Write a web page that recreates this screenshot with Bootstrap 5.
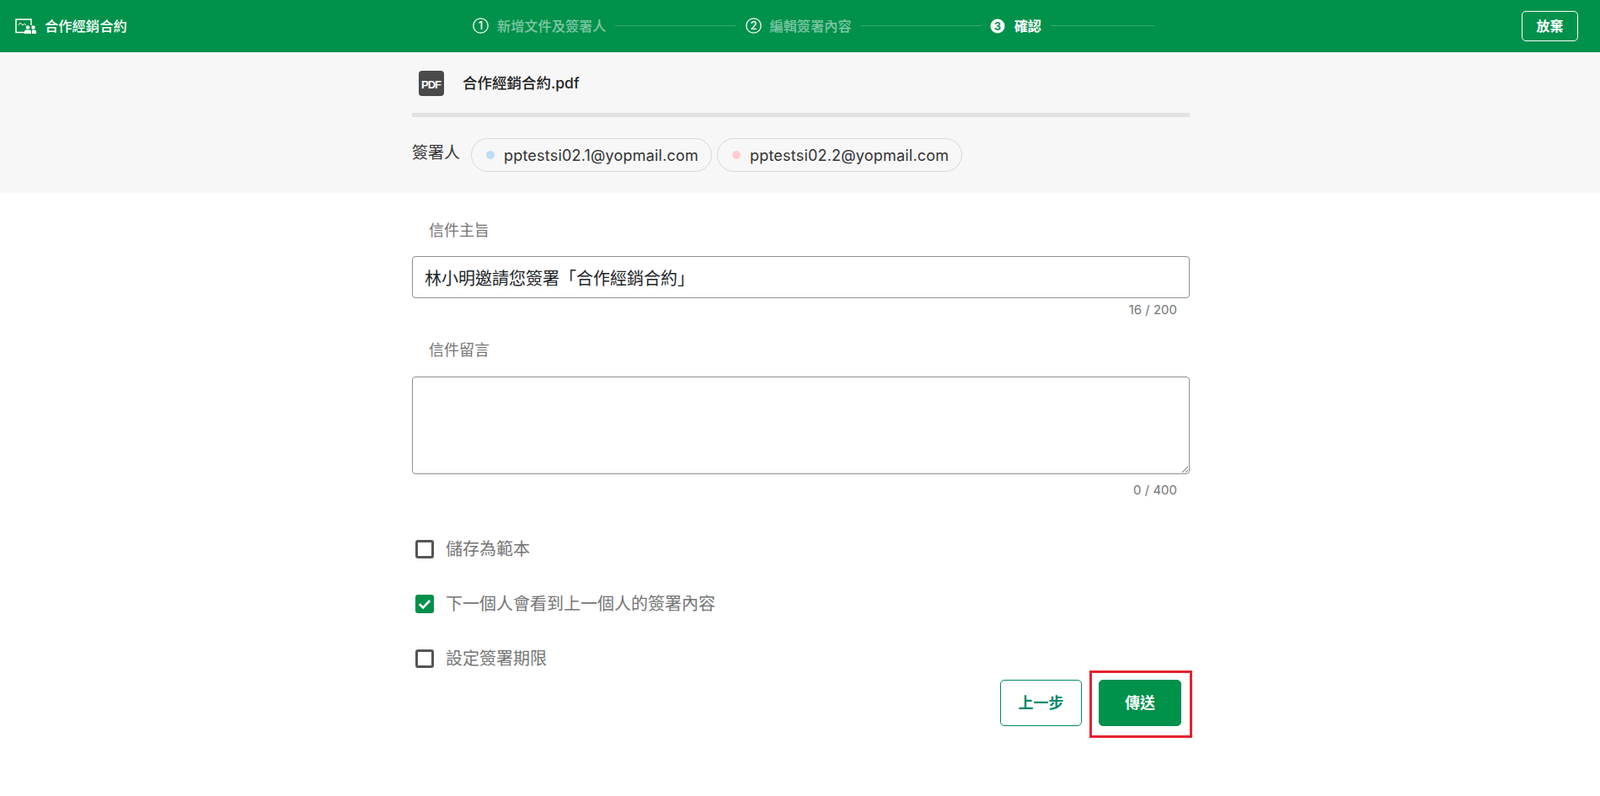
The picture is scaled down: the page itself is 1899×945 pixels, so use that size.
<!DOCTYPE html>
<html lang="zh-Hant">
<head>
<meta charset="utf-8">
<title>確認</title>
<link href="https://cdn.jsdelivr.net/npm/bootstrap@5.3.0/dist/css/bootstrap.min.css" rel="stylesheet">
<style>
:root{--g:#00914b;}
body{font-family:"Inter","Noto Sans CJK TC",sans-serif;color:#212529;background:#fff;}
.topbar{height:62px;background:var(--g);color:#fff;padding:0 26px 0 18px;}
.brandbox{width:543px;font-size:16.300px;font-weight:500;gap:10px;}
.stepitem{gap:10px;font-size:16.200px;font-weight:500;color:rgba(255,255,255,.5);}
.stepitem.nowstep{color:#fff;font-weight:700;gap:11px;}
.stepitem svg{flex:none;}
.stepline{height:1px;background:rgba(255,255,255,.2);}
.w144{width:144px;}.w123{width:123px;}
.step1{margin-right:11px;}.step2{margin-right:10px;}
.quitbtn{width:67px;height:36px;padding:0;font-size:16px;font-weight:700;color:#fff;border:1px solid #fff;border-radius:5px;}
.quitbtn:hover{color:#fff;}
.docband{background:#f7f7f7;height:167px;}
.inner{width:923px;margin-left:489px;}
.filerow{height:72px;padding:22px 0 0 8px;gap:23px;align-items:flex-start;}
.filename{font-size:17.500px;font-weight:500;line-height:30px;color:#212121;margin-left:-1px;}
.splitbar{height:5px;background:#e2e2e2;}
.signrow{margin-top:25px;gap:6px;}
.signlabel{font-size:19px;color:#333;margin-right:7px;line-height:40px;height:40px;position:relative;top:-2px;white-space:nowrap;}
.chipbox{height:40px;border:1px solid #d8d8d8;border-radius:20px;padding:0 15px 0 17px;font-size:18px;color:#333;gap:11px;letter-spacing:.2px;}
.dotmark{width:10px;height:10px;border-radius:50%;flex:none;}
.dotblue{background:#bcdcf8;}.dotpink{background:#ffccd2;}
.fieldtitle{font-size:18px;line-height:27px;color:#757575;margin:0 0 17px;padding-left:20px;}
.fieldbox{border:1px solid #8f8f8f;border-radius:4px;font-size:20px;color:#212529;padding:0 12px 0 14px;font-family:"Noto Sans CJK TC",sans-serif;}
input.fieldbox{height:50px;}
textarea.fieldbox{height:116px;resize:both;display:block;}
.countnote{font-size:15px;line-height:21px;color:#757575;text-align:right;padding-right:15px;}
.checkrow{height:30px;margin:0 0 35px;padding:0 0 0 4px;display:flex;align-items:center;gap:14px;}
.checkrow .form-check-input{width:22px;height:22px;margin:0;float:none;border:3px solid #555;border-radius:3px;flex:none;}
.checkrow .form-check-input:checked{border-color:var(--g);background-color:var(--g);background-origin:border-box;background-size:22px 22px;background-repeat:no-repeat;background-position:center;background-image:url("data:image/svg+xml,%3Csvg xmlns='http://www.w3.org/2000/svg' viewBox='0 0 22 22'%3E%3Cpath d='M4.800 11.200l4.300 4.300 8-8.500' fill='none' stroke='%23fff' stroke-width='2.600'/%3E%3C/svg%3E");}
.checkrow .form-check-label{font-size:20px;color:#757575;}
.actionrow{gap:20px;padding-right:10px;margin-top:-25px;padding-bottom:30px;}
.backbtn,.sendbtn{height:55px;font-size:18px;font-weight:700;padding:0;border-radius:5px;}
.backbtn{width:97px;color:#00896a;border:1px solid #00896a;background:#fff;}
.sendbtn{width:98px;color:#fff;background:var(--g);border:1px solid var(--g);}
.sendwrap{position:relative;height:55px;}
.redframe{position:absolute;left:-11px;top:-11px;width:122px;height:80px;border:3px solid #e6212e;pointer-events:none;}
.mt-subject{padding-top:31px;}
.mt-subject .countnote{margin-top:3px;}
.mt-message{padding-top:24px;}
.mt-message .fieldtitle{margin-bottom:18px;}
.note2{margin-top:7.500px;}
.checkgroup{padding-top:45px;}
</style>
</head>
<body>
<header class="topbar d-flex align-items-center">
  <div class="brandbox d-flex align-items-center">
    <svg width="25" height="18" viewBox="0 0 25 18" fill="none"><path d="M12 16.500H1V1h18v7" stroke="#fff" stroke-width="1.500"/><path d="M4 8l2-3 3 3 2-2 2 2" stroke="#fff" stroke-width="1"/><circle cx="15" cy="10.500" r="2.200" fill="#fff"/><circle cx="21.500" cy="10.500" r="2.200" fill="#fff"/><path d="M11 18v-2.500q0-2 2-2h4q2 0 2 2v2.500z M20 18v-4.500h3q2 0 2 2v2.500z" fill="#fff"/></svg>
    <span>合作經銷合約</span>
  </div>
  <nav class="d-flex align-items-center flex-grow-1">
    <div class="stepitem step1 d-flex align-items-center">
      <svg width="19" height="19" viewBox="0 0 19 19"><circle cx="9.500" cy="9.500" r="8.700" fill="none" stroke="#fff" stroke-width="1.300"/><text x="9.500" y="14" text-anchor="middle" font-size="13" fill="#fff" font-family="Inter">1</text></svg>
      <span>新增文件及簽署人</span><span class="stepline w144"></span>
    </div>
    <div class="stepitem step2 d-flex align-items-center">
      <svg width="19" height="19" viewBox="0 0 19 19"><circle cx="9.500" cy="9.500" r="8.700" fill="none" stroke="#fff" stroke-width="1.300"/><text x="9.500" y="14" text-anchor="middle" font-size="13" fill="#fff" font-family="Inter">2</text></svg>
      <span>編輯簽署內容</span><span class="stepline w144"></span>
    </div>
    <div class="stepitem nowstep d-flex align-items-center">
      <svg width="18" height="18" viewBox="0 0 18 18"><circle cx="9" cy="9" r="8.500" fill="#fff"/><text x="9" y="13.500" text-anchor="middle" font-size="12.500" font-weight="700" fill="#00914b" font-family="Inter">3</text></svg>
      <span>確認</span><span class="stepline w123"></span>
    </div>
  </nav>
  <button type="button" class="btn quitbtn ms-auto">放棄</button>
</header>

<section class="docband">
  <div class="inner">
    <div class="filerow d-flex">
      <svg width="30" height="30" viewBox="0 0 30 30"><rect width="30" height="30" rx="4" fill="#4a4a4a"/><text x="3" y="20.500" font-size="13" font-weight="700" fill="#fff" font-family="Liberation Sans" textLength="24" lengthAdjust="spacing">PDF</text></svg>
      <div class="filename">合作經銷合約.pdf</div>
    </div>
    <div class="splitbar"></div>
    <div class="signrow d-flex">
      <span class="signlabel">簽署人</span>
      <span class="chipbox d-inline-flex align-items-center"><i class="dotmark dotblue"></i>pptestsi02.1@yopmail.com</span>
      <span class="chipbox d-inline-flex align-items-center"><i class="dotmark dotpink"></i>pptestsi02.2@yopmail.com</span>
    </div>
  </div>
</section>

<main class="inner">
  <div class="mt-subject">
    <label class="fieldtitle d-block" for="subj">信件主旨</label>
    <input id="subj" class="form-control fieldbox" type="text" value="林小明邀請您簽署「合作經銷合約」">
    <div class="countnote">16 / 200</div>
  </div>
  <div class="mt-message">
    <label class="fieldtitle d-block" for="msg">信件留言</label>
    <textarea id="msg" class="form-control fieldbox"></textarea>
    <div class="countnote note2">0 / 400</div>
  </div>
  <div class="checkgroup">
    <div class="checkrow form-check"><input class="form-check-input" type="checkbox" id="c1"><label class="form-check-label" for="c1">儲存為範本</label></div>
    <div class="checkrow form-check"><input class="form-check-input" type="checkbox" id="c2" checked><label class="form-check-label" for="c2">下一個人會看到上一個人的簽署內容</label></div>
    <div class="checkrow form-check"><input class="form-check-input" type="checkbox" id="c3"><label class="form-check-label" for="c3">設定簽署期限</label></div>
  </div>
  <div class="actionrow d-flex justify-content-end">
    <button type="button" class="btn backbtn">上一步</button>
    <div class="sendwrap"><button type="button" class="btn sendbtn">傳送</button><div class="redframe"></div></div>
  </div>
</main>
<script src="https://cdn.jsdelivr.net/npm/bootstrap@5.3.0/dist/js/bootstrap.bundle.min.js"></script>
</body>
</html>
